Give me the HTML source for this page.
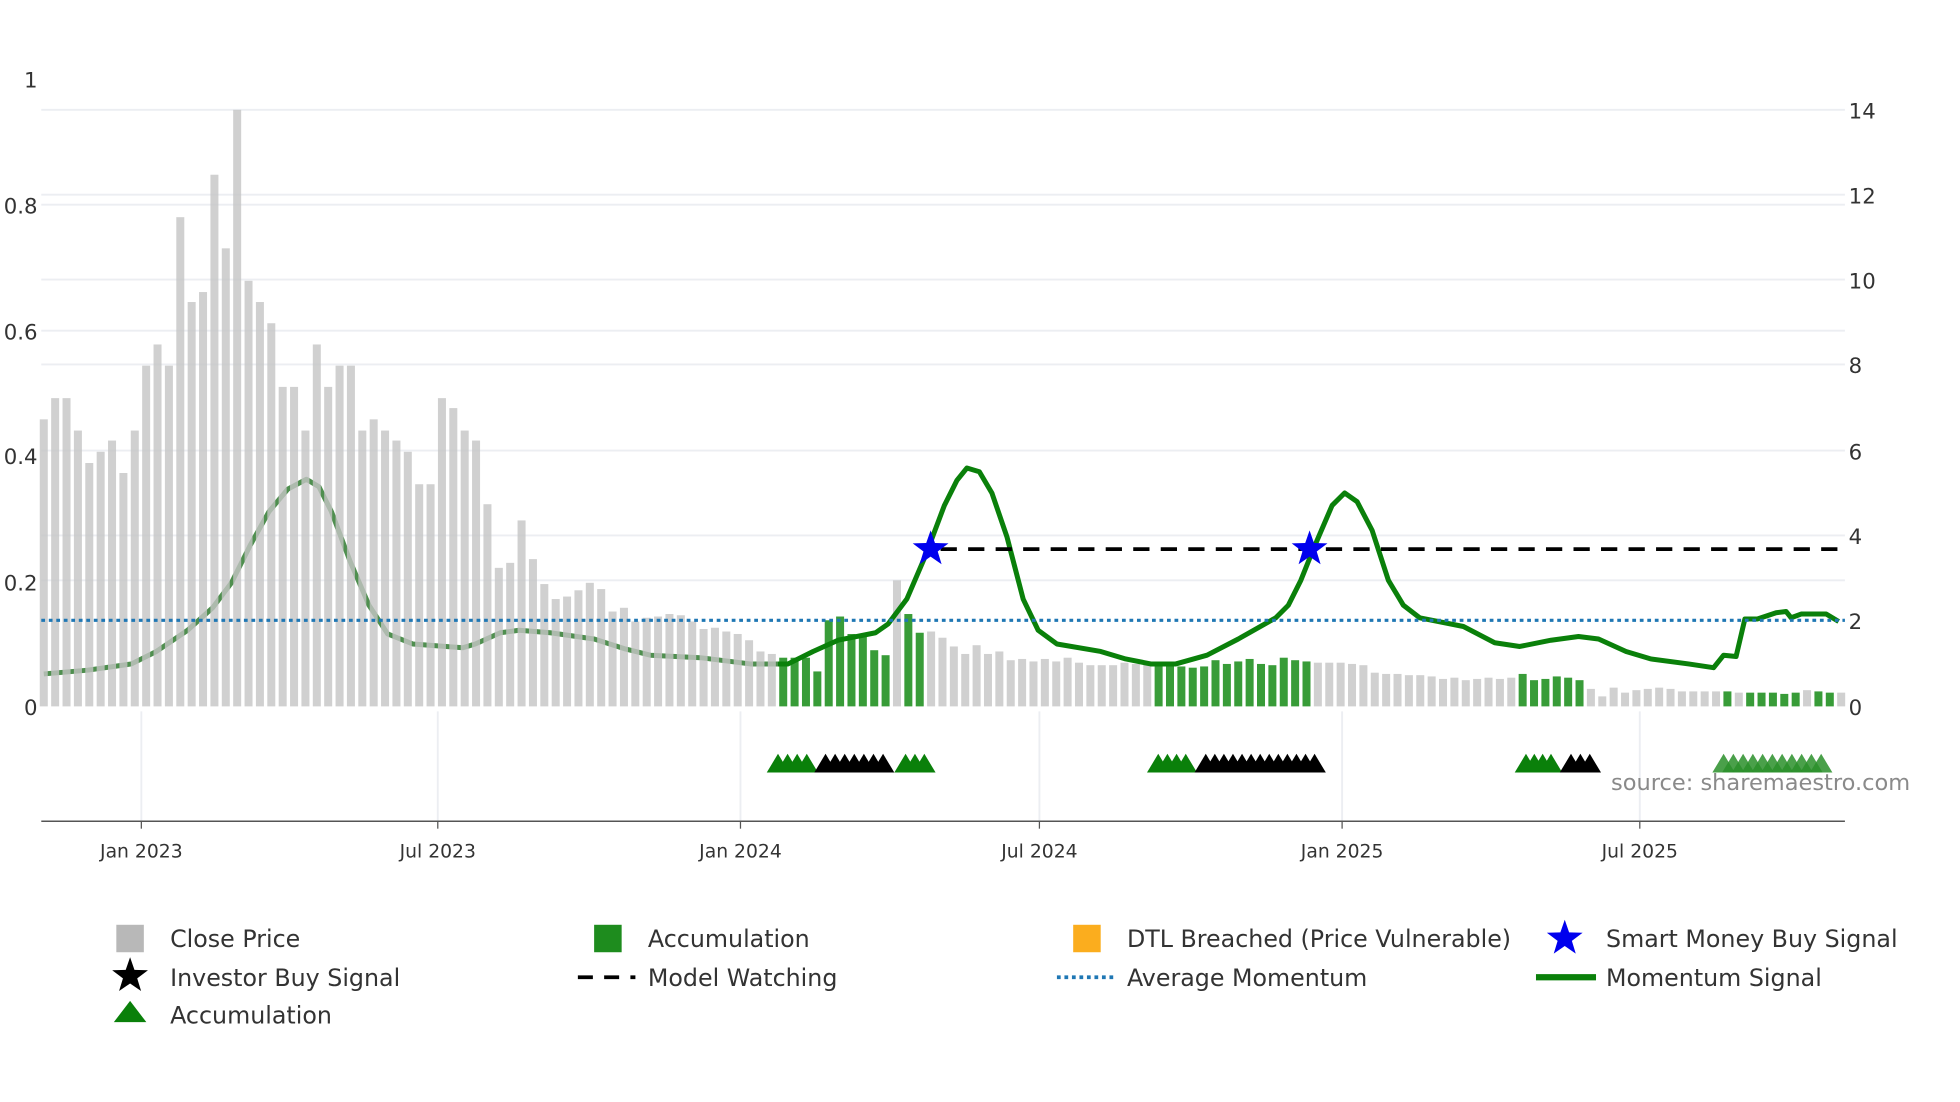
<!DOCTYPE html>
<html><head><meta charset="utf-8"><style>
html,body{margin:0;padding:0;background:#fff;width:1960px;height:1102px;overflow:hidden}
svg{display:block}
text{font-family:"DejaVu Sans","Liberation Sans",sans-serif;fill:#333}
</style></head><body>
<svg id="s" width="1960" height="1102" viewBox="0 0 1567 883" preserveAspectRatio="none" xmlns="http://www.w3.org/2000/svg">
<g stroke="#eceef2" stroke-width="1.5">
<line x1="33" x2="1475" y1="88" y2="88"/><line x1="33" x2="1475" y1="156" y2="156"/><line x1="33" x2="1475" y1="224" y2="224"/><line x1="33" x2="1475" y1="292" y2="292"/><line x1="33" x2="1475" y1="361" y2="361"/><line x1="33" x2="1475" y1="429" y2="429"/><line x1="33" x2="1475" y1="465" y2="465"/><line x1="33" x2="1475" y1="164" y2="164"/><line x1="33" x2="1475" y1="265" y2="265"/>
<line x1="113" x2="113" y1="570" y2="658"/><line x1="350" x2="350" y1="570" y2="658"/><line x1="592" x2="592" y1="570" y2="658"/><line x1="831" x2="831" y1="570" y2="658"/><line x1="1073" x2="1073" y1="570" y2="658"/><line x1="1311" x2="1311" y1="570" y2="658"/>
</g>
<g font-size="17" text-anchor="end">
<text x="30" y="70">1</text><text x="30" y="171">0.8</text><text x="30" y="272">0.6</text><text x="30" y="372">0.4</text><text x="30" y="473">0.2</text><text x="30" y="573">0</text>
</g>
<g font-size="17">
<text x="1478" y="95">14</text><text x="1478" y="163">12</text><text x="1478" y="231">10</text><text x="1478" y="299">8</text><text x="1478" y="368">6</text><text x="1478" y="436">4</text><text x="1478" y="504">2</text><text x="1478" y="573">0</text>
</g>
<clipPath id="cl"><rect x="0" y="0" width="622" height="700"/></clipPath>
<clipPath id="cr"><rect x="622" y="0" width="1000" height="700"/></clipPath>
<polyline id="ll" clip-path="url(#cl)" fill="none" stroke="#4f8f4f" stroke-width="4" stroke-linejoin="round"/>
<g id="bars"></g>
<polyline id="ml" clip-path="url(#cr)" fill="none" stroke="#0a800a" stroke-width="4" stroke-linejoin="round"/>
<line x1="33" x2="1475" y1="497" y2="497" stroke="#1f77b4" stroke-width="2.5" stroke-dasharray="3,3"/>
<line x1="752" x2="1470" y1="440" y2="440" stroke="#000" stroke-width="3" stroke-dasharray="13,9"/>
<g id="stars"></g>
<g id="tris"></g>
<line x1="33" x2="1475" y1="658" y2="658" stroke="#555" stroke-width="1.2"/>
<g stroke="#555"><line x1="113" x2="113" y1="658" y2="664"/><line x1="350" x2="350" y1="658" y2="664"/><line x1="592" x2="592" y1="658" y2="664"/><line x1="831" x2="831" y1="658" y2="664"/><line x1="1073" x2="1073" y1="658" y2="664"/><line x1="1311" x2="1311" y1="658" y2="664"/></g>
<g font-size="15" text-anchor="middle">
<text x="113" y="687">Jan 2023</text><text x="350" y="687">Jul 2023</text><text x="592" y="687">Jan 2024</text><text x="831" y="687">Jul 2024</text><text x="1073" y="687">Jan 2025</text><text x="1311" y="687">Jul 2025</text>
</g>
<text x="1288" y="633" font-size="18" style="fill:#8a8a8a">source: sharemaestro.com</text>
<g font-size="19">
<rect x="93" y="741" width="22" height="22" fill="#b8b8b8"/><text x="136" y="759">Close Price</text>
<rect x="475" y="741" width="22" height="22" fill="#1e8c1e"/><text x="518" y="759">Accumulation</text>
<rect x="858" y="741" width="22" height="22" fill="#fbad1e"/><text x="901" y="759">DTL Breached (Price Vulnerable)</text>
<text x="1284" y="759">Smart Money Buy Signal</text>
<text x="136" y="790">Investor Buy Signal</text>
<line x1="462" x2="508" y1="783" y2="783" stroke="#000" stroke-width="3" stroke-dasharray="12,9"/><text x="518" y="790">Model Watching</text>
<line x1="845" x2="890" y1="783" y2="783" stroke="#1f77b4" stroke-width="3" stroke-dasharray="3,3"/><text x="901" y="790">Average Momentum</text>
<line x1="1228" x2="1276" y1="783" y2="783" stroke="#0a800a" stroke-width="5"/><text x="1284" y="790">Momentum Signal</text>
<polygon points="91,819 104,802 117,819" fill="#0a800a"/><text x="136" y="820">Accumulation</text>
</g>
<g id="legstars"></g>
</svg>
<script>
var NS="http://www.w3.org/2000/svg";
var P="35,540 70,537 105,532 125,522 150,505 170,487 185,467 200,437 215,410 230,392 245,384 255,390 265,410 280,450 295,485 310,508 330,516 370,519 380,516 400,507 415,505 440,507 475,512 500,520 520,525 560,527 600,532 630,532 650,522 670,513 700,507 710,500 725,480 740,445 755,405 765,385 773,375 783,378 793,395 805,430 818,480 830,505 845,516 880,522 900,528 920,532 940,532 965,525 990,512 1020,495 1030,485 1040,465 1050,440 1065,405 1075,395 1085,402 1097,425 1110,465 1122,485 1135,495 1170,502 1195,515 1215,518 1240,513 1262,510 1278,512 1300,522 1320,528 1350,532 1370,535 1378,525 1388,526 1395,496 1405,496 1420,491 1428,490 1432,495 1440,492 1460,492 1470,498";
document.getElementById("ll").setAttribute("points",P);
document.getElementById("ml").setAttribute("points",P);
function el(t,a,p){var e=document.createElementNS(NS,t);for(var k in a)e.setAttribute(k,a[k]);document.getElementById(p).appendChild(e);}
var tops=[336,319,319,345,371,362,353,379,345,293,276,293,174,242,234,140,199,88,225,242,259,310,310,345,276,310,293,293,345,336,345,353,362,388,388,319,327,345,353,404,455,451,417,448,468,480,478,473,467,472,490,487,498,495,494,492,493,498,504,503,506,508,513,522,524];
var g=[];tops.forEach(function(t){g.push([t,0]);});
[[527,1],[527,1],[527,1],[538,1],[497,1],[494,1],[508,1],[508,1],[521,1],[525,1],[465,0],[492,1],[507,1],[506,0],[511,0],[518,0],[524,0],[517,0],[524,0],[522,0],[529,0],[528,0],[530,0],[528,0],[530,0],[527,0],[531,0],[533,0],[533,0],[533,0],[531,0],[532,0],[530,0]].forEach(function(a){g.push(a);});
var gr=[532,533,534,535,534,529,532,530,528,532,533,527,529,530];gr.forEach(function(t){g.push([t,1]);});
var gy=[531,531,531,532,533,539,540,540,541,541,542,544,543,545,544,543,544,543];gy.forEach(function(t){g.push([t,0]);});
[540,545,544,542,543,545].forEach(function(t){g.push([t,1]);});
[552,558,551,555,553,552,551,552,554,554,554,554].forEach(function(t){g.push([t,0]);});
[554,555,555,555,555,556,555].forEach(function(t,i){g.push([t,i==1?0:1]);});
[553,554,555,555].forEach(function(t,i){g.push([t,(i==0||i==3)?0:1]);});
var n=g.length,step=(1472-35)/(n-1);
g.forEach(function(b,i){var x=35+i*step;el("rect",{x:x-3.2,y:b[0],width:6.4,height:566-b[0],fill:b[1]?"#229122":"#c4c4c4","fill-opacity":b[1]?0.9:0.8},"bars");});
function star(cx,cy,r,fill,p){var s="";for(var i=0;i<10;i++){var rr=i%2?r*0.4:r,a=-Math.PI/2+i*Math.PI/5;s+=(cx+rr*Math.cos(a)).toFixed(1)+","+(cy+rr*Math.sin(a)).toFixed(1)+" ";}el("polygon",{points:s,fill:fill},p);}
star(744,440,15,"#0000ee","stars");star(1047,440,15,"#0000ee","stars");
star(1251,752,15,"#0000ee","legstars");star(104,782,15,"#000","legstars");
function tri(x0,x1,c,op){for(var x=x0;x<=x1+0.1;x+=(x1-x0)/Math.max(1,Math.round((x1-x0)/7.5))){el("polygon",{points:(x-9)+",619 "+x+",604 "+(x+9)+",619",fill:c,"fill-opacity":op},"tris");}}
tri(622,645,"#0a800a",1);tri(660,706,"#000",1);tri(724,739,"#0a800a",1);
tri(926,948,"#0a800a",1);tri(964,1051,"#000",1);
tri(1220,1240,"#0a800a",1);tri(1256,1271,"#000",1);
tri(1378,1456,"#2a8f2a",0.85);
</script>
</body></html>
